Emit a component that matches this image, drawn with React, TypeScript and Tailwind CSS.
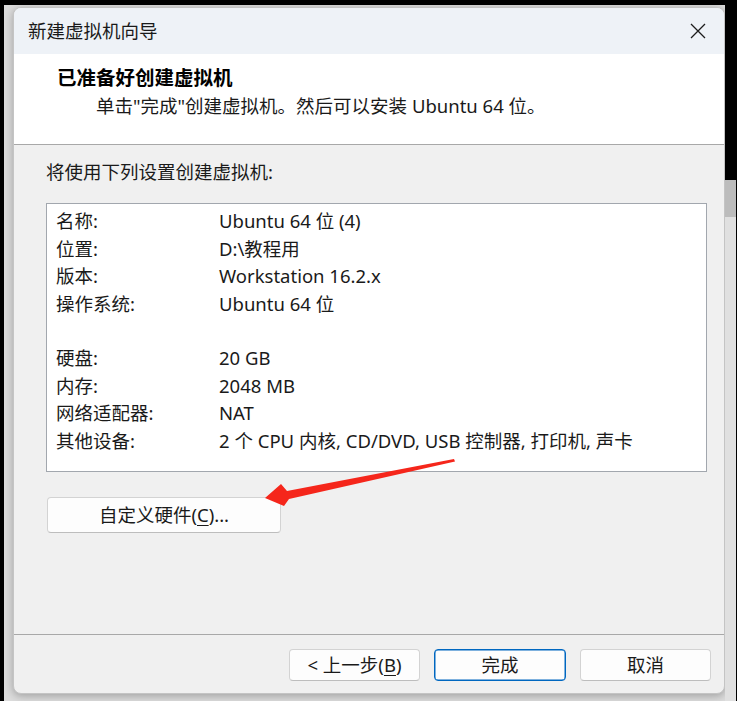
import React from 'react';

const rows: [string, string][] = [
  ['名称:', 'Ubuntu 64 位 (4)'],
  ['位置:', 'D:\\教程用'],
  ['版本:', 'Workstation 16.2.x'],
  ['操作系统:', 'Ubuntu 64 位'],
  ['', ''],
  ['硬盘:', '20 GB'],
  ['内存:', '2048 MB'],
  ['网络适配器:', 'NAT'],
  ['其他设备:', '2 个 CPU 内核, CD/DVD, USB 控制器, 打印机, 声卡'],
];

const WinButton = ({
  children,
  primary,
}: {
  children: React.ReactNode;
  primary?: boolean;
}) => (
  <button
    className={
      primary
        ? 'w-[132px] h-[32px] rounded-[4px] bg-[#fdfdfd] border border-[#0067c0] shadow-[inset_0_0_0_0.5px_#0067c0] text-[18.5px] leading-none text-[#1a1a1a]'
        : 'w-[131px] h-[32px] rounded-[4px] bg-[#fdfdfd] border border-[#d3d3d3] border-b-[#bdbdbd] text-[18.5px] leading-none text-[#1a1a1a]'
    }
  >
    {children}
  </button>
);

const App = () => {
  return (
    <div className="relative w-[737px] h-[701px] bg-black flex overflow-hidden font-['Noto_Sans','Noto_Sans_CJK_SC',sans-serif] text-[#1a1a1a]">
      {/* Left edge */}
      <div className="w-[4px] shrink-0"></div>

      {/* Desktop behind */}
      <div className="w-[721px] shrink-0 flex flex-col">
        <div className="h-[5px] shrink-0"></div>
        <div className="flex-1 bg-[#dcdcdc] pl-[9px] pt-[2px]">
          {/* Window */}
          <div className="w-[712px] h-[687px] flex flex-col bg-[#f0f0f0] rounded-[8px] border border-[#c4c4c4] overflow-hidden shadow-[0_2px_8px_rgba(0,0,0,0.28)]">
            {/* Title bar */}
            <div className="h-[46px] shrink-0 bg-[#eef2f7] flex items-center justify-between pl-[14px] pr-[18px]">
              <span className="text-[18.5px] leading-none">新建虚拟机向导</span>
              <svg width="16" height="16" viewBox="0 0 16 16" className="text-[#1c1c1c]">
                <path d="M1 1 L15 15 M15 1 L1 15" stroke="currentColor" strokeWidth="1.3" fill="none" />
              </svg>
            </div>

            {/* Header */}
            <div className="h-[91px] shrink-0 bg-white border-b border-[#a8a8a8] pl-[43px] pt-[12px]">
              <div className="text-[19.5px] font-bold leading-[24px] text-black">已准备好创建虚拟机</div>
              <div className="text-[18.5px] leading-[24px] pl-[39px] mt-[4px] text-[#1a1a1a]">
                单击"完成"创建虚拟机。然后可以安装 Ubuntu 64 位。
              </div>
            </div>

            {/* Body */}
            <div className="flex-1 flex flex-col pl-[32px] pr-[17px] pt-[15px]">
              <div className="text-[18.5px] leading-[24px]">将使用下列设置创建虚拟机:</div>
              <div className="mt-[19px] h-[269px] bg-white border border-[#a2a7ae] pl-[9px] pt-[4px]">
                {rows.map(([k, v], i) => (
                  <div key={i} className="flex h-[27.4px] items-center text-[18.5px] leading-none">
                    <span className="w-[163px] shrink-0">{k}</span>
                    <span>{v}</span>
                  </div>
                ))}
              </div>
              <div className="mt-[25px]">
                <button className="w-[234px] h-[36px] rounded-[4px] bg-[#fdfdfd] border border-[#d3d3d3] border-b-[#bdbdbd] text-[18.5px] leading-none ml-[1px]">
                  自定义硬件(<span className="underline underline-offset-[3px]">C</span>)...
                </button>
              </div>
            </div>

            {/* Footer */}
            <div className="h-[59px] shrink-0 border-t border-[#a8a8a8] flex justify-end items-start gap-[14px] pt-[14px] pr-[13px]">
              <WinButton>
                {'< 上一步('}
                <span className="underline underline-offset-[3px]">B</span>)
              </WinButton>
              <WinButton primary>完成</WinButton>
              <WinButton>取消</WinButton>
            </div>
          </div>
        </div>
      </div>

      {/* Right edge: window behind */}
      <div className="w-[12px] shrink-0 flex flex-col">
        <div className="h-[180px] shrink-0"></div>
        <div className="h-[37px] shrink-0 bg-[#bcbcbc] mr-[1px]"></div>
        <div className="flex-1 bg-[#e0e0e0] mr-[1px]"></div>
      </div>

      {/* Red annotation arrow */}
      <svg className="absolute left-0 top-0 pointer-events-none" width="737" height="701" viewBox="0 0 737 701">
        <polygon
          points="265,498 281,484 287,491 454,459 455,461.5 289,499 284,506"
          fill="#f5261b"
        />
      </svg>
    </div>
  );
};

export default App;
